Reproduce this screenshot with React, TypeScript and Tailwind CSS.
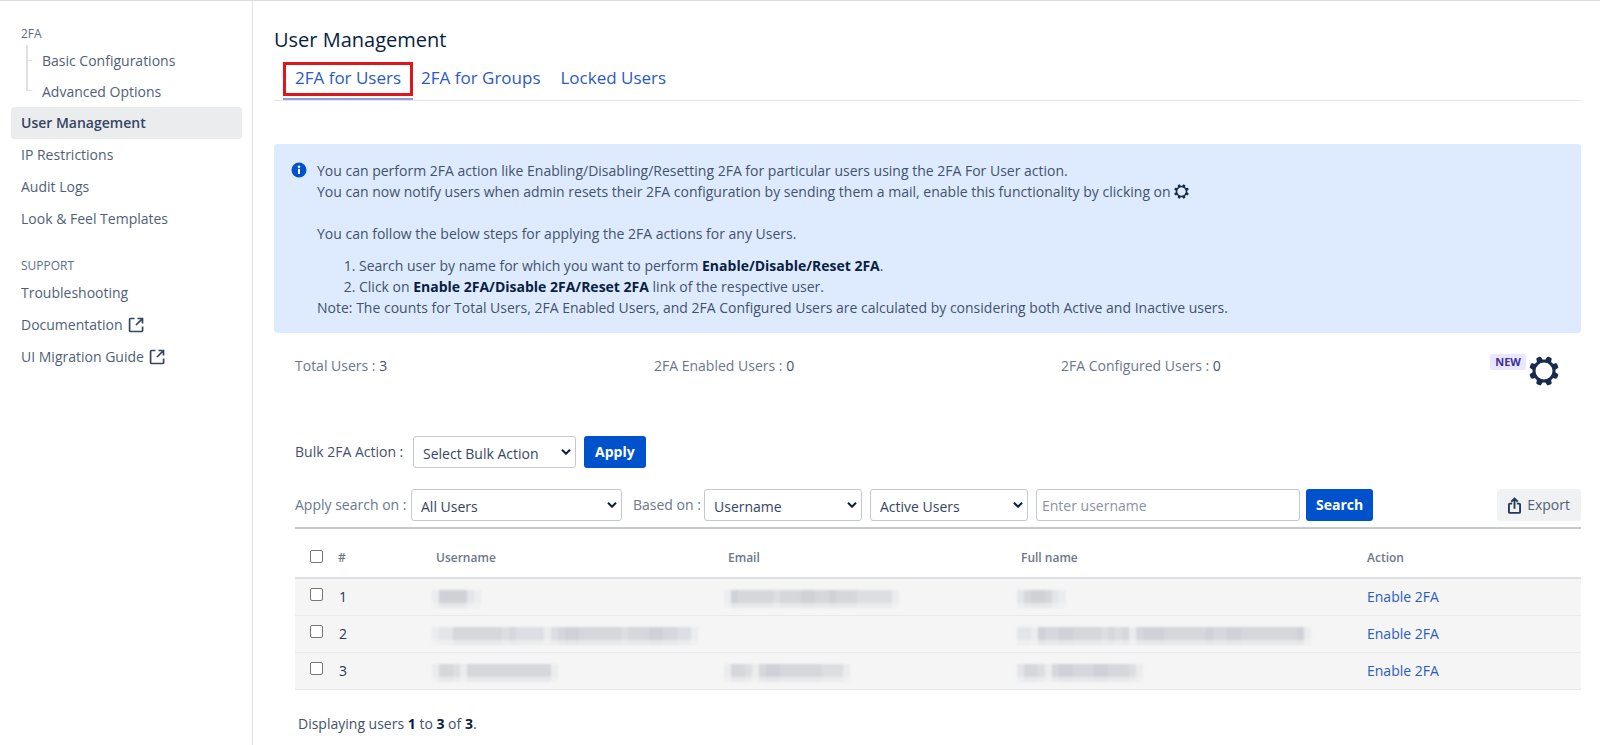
import type { ReactNode } from "react";

const BLOCK = 7;

type User = {
  id: number;
  username: string;
  email: string;
  fullName: string;
};

// Every digit is the darkness of one block of the redacted text, 0 is blank.
const USERS: User[] = [
  { id: 1, username: "1555521", email: "1544444344455445444333331", fullName: "2455421" },
  {
    id: 2,
    username: "12244444443433331345544444434445544331",
    email: "",
    fullName: "221544554444343414555444444544554444444451",
  },
  { id: 3, username: "144314444444444441", email: "144314554444443331", fullName: "244314554445544431" },
];

const SHADES = ["none", "#ebecee", "#e3e5e8", "#dcdee1", "#d5d7db", "#cfd1d6"];

function Redacted({ pattern }: { pattern: string }) {
  if (!pattern) return null;
  return (
    <svg width={pattern.length * BLOCK} height="22" aria-hidden="true" className="-ml-1 block overflow-visible blur-[1px]">
      {pattern.split("").map((level, i) => (
        <g key={i} fill={SHADES[Number(level)]}>
          <rect x={i * BLOCK} y="4" width={BLOCK} height="13" />
          <rect x={i * BLOCK} y="17" width={BLOCK} height="5" opacity="0.4" />
        </g>
      ))}
    </svg>
  );
}

function GearIcon({ className }: { className: string }) {
  return (
    <svg viewBox="0 0 30 30" className={className} aria-hidden="true">
      <g fill="currentColor">
        {[22.5, 67.5, 112.5, 157.5, 202.5, 247.5, 292.5, 337.5].map((angle) => (
          <path key={angle} d="M11.6 6 12.4 1.300Q12.600.2 13.700.2h2.600q1.100 0 1.300 1.100L18.400 6z" transform={`rotate(${angle} 15 15)`} />
        ))}
      </g>
      <circle cx="15" cy="15" r="10" fill="none" stroke="currentColor" strokeWidth="3" />
    </svg>
  );
}

function ExternalIcon() {
  return (
    <svg viewBox="0 0 16 16" className="h-4 w-4" fill="none" stroke="#344563" strokeWidth="1.7" aria-hidden="true">
      <path d="M6.5 1.5H2.6q-1 0-1 1v11q0 1 1 1h11q1 0 1-1V9.5M9.5 1.5h5v5M14.2 1.8 8 8" />
    </svg>
  );
}

function ExportIcon() {
  return (
    <svg viewBox="0 0 14 18" className="h-[17px] w-[13px]" fill="none" stroke="#253858" strokeWidth="2" aria-hidden="true">
      <path d="M4.5 7H2q-1 0-1 1v8q0 1 1 1h10q1 0 1-1V8q0-1-1-1H9.5M7 12.5V2M3.5 5 7 1.6 10.5 5" />
    </svg>
  );
}

function InfoIcon() {
  return (
    <svg viewBox="0 0 16 16" className="h-4 w-4 shrink-0" aria-hidden="true">
      <circle cx="8" cy="8" r="7.5" fill="#0052cc" />
      <circle cx="8" cy="4.7" r="1.2" fill="#fff" />
      <rect x="7" y="6.8" width="2" height="5.2" rx=".6" fill="#fff" />
    </svg>
  );
}

function NavItem({ children, active = false, external = false }: { children: ReactNode; active?: boolean; external?: boolean }) {
  return (
    <li>
      <a
        href="#"
        className={
          active
            ? "flex h-8 items-center rounded-[3px] bg-[#ebecee] px-2.5 font-semibold text-[#344563]"
            : "flex h-8 items-center gap-[5px] px-2.5 text-[#505f79]"
        }
      >
        {children}
        {external && <ExternalIcon />}
      </a>
    </li>
  );
}

function Sidebar() {
  return (
    <nav className="w-[253px] shrink-0 border-r border-[#dfe1e5] pl-[11px] pr-2.5 pt-[22px]">
      <h2 className="h-[22px] px-2.5 text-xs leading-[22px] text-[#5e6c84]">2FA</h2>
      <ul className="relative pl-5">
        <li className="absolute left-[15px] top-0 h-[46px] w-1.5 border-b border-l-2 border-[#dfe1e5]" aria-hidden="true" />
        <li className="absolute left-[15px] top-[15px] w-1.5 border-t border-[#dfe1e5]" aria-hidden="true" />
        <li>
          <a href="#" className="flex h-[31px] items-center px-[11px] text-[#505f79]">Basic Configurations</a>
        </li>
        <li>
          <a href="#" className="flex h-[31px] items-center px-[11px] text-[#505f79]">Advanced Options</a>
        </li>
      </ul>
      <ul>
        <NavItem active>User Management</NavItem>
        <NavItem>IP Restrictions</NavItem>
        <NavItem>Audit Logs</NavItem>
        <NavItem>Look &amp; Feel Templates</NavItem>
      </ul>
      <h2 className="mt-5 h-[22px] px-2.5 text-xs leading-[22px] text-[#5e6c84]">SUPPORT</h2>
      <ul>
        <NavItem>Troubleshooting</NavItem>
        <NavItem external>Documentation</NavItem>
        <NavItem external>UI Migration Guide</NavItem>
      </ul>
    </nav>
  );
}

function Select({ id, label, options, className }: { id: string; label?: string; options: string[]; className: string }) {
  return (
    <div className={`relative ${className}`}>
      <select
        id={id}
        aria-label={label}
        className="h-8 w-full appearance-none rounded-[3px] border border-[#c4c8cf] bg-white pl-[9px] pr-6 pt-1 text-[#344563]"
      >
        {options.map((option) => (
          <option key={option}>{option}</option>
        ))}
      </select>
      <svg viewBox="0 0 10 6" className="pointer-events-none absolute right-[5px] top-[13px] h-1.5 w-2.5" fill="none" stroke="#091e42" strokeWidth="2" aria-hidden="true">
        <path d="m1 .7 4 4 4-4" />
      </svg>
    </div>
  );
}

const checkboxClass = "mb-1 block h-[13px] w-[13px] appearance-none rounded-[2px] border border-[#767676] bg-white";

function InfoPanel() {
  return (
    <section className="mt-[43px] flex gap-2.5 rounded-[3px] bg-[#deebff] pb-[15px] pl-[17px] pr-4 pt-4 leading-[21px] text-[#42526e]">
      <div className="pt-0.5">
        <InfoIcon />
      </div>
      <div>
        <p>You can perform 2FA action like Enabling/Disabling/Resetting 2FA for particular users using the 2FA For User action.</p>
        <p>
          You can now notify users when admin resets their 2FA configuration by sending them a mail, enable this functionality by clicking on{" "}
          <GearIcon className="inline h-[15px] w-[15px] align-[-2px] text-[#172b4d]" />
        </p>
        <p className="mt-[21px]">You can follow the below steps for applying the 2FA actions for any Users.</p>
        <ol className="mt-[11px] list-decimal pl-[42px]">
          <li>
            Search user by name for which you want to perform <b className="text-[#091e42]">Enable/Disable/Reset 2FA</b>.
          </li>
          <li>
            Click on <b className="text-[#091e42]">Enable 2FA/Disable 2FA/Reset 2FA</b> link of the respective user.
          </li>
        </ol>
        <p>Note: The counts for Total Users, 2FA Enabled Users, and 2FA Configured Users are calculated by considering both Active and Inactive users.</p>
      </div>
    </section>
  );
}

function UsersTable() {
  return (
    <table className="w-full table-fixed border-t-2 border-[#c8c9cb] text-left">
      <thead>
        <tr className="h-[50px] border-b-2 border-[#dfe0e3] text-xs text-[#6b778c]">
          <th className="w-[133px] pl-[15px] pt-2.5 font-semibold">
            <div className="flex items-center gap-[15px]">
              <input type="checkbox" aria-label="Select all users" className={checkboxClass} />
              <span>#</span>
            </div>
          </th>
          <th className="w-[292px] pl-2 pt-2.5 font-semibold">Username</th>
          <th className="w-[293px] pl-2 pt-2.5 font-semibold">Email</th>
          <th className="pl-2 pt-2.5 font-semibold">Full name</th>
          <th className="w-[222px] pl-2 pt-2.5 font-semibold">Action</th>
        </tr>
      </thead>
      <tbody>
        {USERS.map((user) => (
          <tr key={user.id} className="h-[37px] border-b border-[#e9e9eb] bg-[#f5f5f5]">
            <td className="pl-[15px]">
              <div className="flex items-center gap-4">
                <input type="checkbox" aria-label={`Select user ${user.id}`} className={checkboxClass} />
                <span className="text-[#253858]">{user.id}</span>
              </div>
            </td>
            <td className="pl-2">
              <Redacted pattern={user.username} />
            </td>
            <td className="pl-2">
              <Redacted pattern={user.email} />
            </td>
            <td className="pl-2">
              <Redacted pattern={user.fullName} />
            </td>
            <td className="pl-2">
              <a href="#" className="text-[#2a5bc4]">Enable 2FA</a>
            </td>
          </tr>
        ))}
      </tbody>
    </table>
  );
}

export default function App() {
  return (
    <div className="flex min-h-screen border-t border-[#dddddd] bg-white font-['Open_Sans','Noto_Sans',sans-serif] text-sm text-[#42526e]">
      <Sidebar />
      <main className="min-w-0 flex-1 pb-2 pl-[21px] pr-[19px] pt-6">
        <h1 className="text-xl leading-[30px] text-[#091e42]">User Management</h1>
        <div className="flex border-b border-[#e6e7ea] pl-[9px] pt-[7px] text-[17px] text-[#2a5bc4]">
          <div className="border-b-2 border-[#8f9ae3] pb-0.5">
            <a href="#" className="flex h-[34px] items-center border-[3px] border-[#e0161c] px-[9px] pb-0.5">2FA for Users</a>
          </div>
          <a href="#" className="flex h-[34px] items-center px-2 pb-0.5">2FA for Groups</a>
          <a href="#" className="flex h-[34px] items-center px-3 pb-0.5">Locked Users</a>
        </div>

        <InfoPanel />

        <div className="pl-[21px]">
          <div className="flex h-[66px] items-center text-[#6b778c]">
            <p className="w-[359px]">Total Users : <span className="text-[#42526e]">3</span></p>
            <p className="w-[407px]">2FA Enabled Users : <span className="text-[#42526e]">0</span></p>
            <p>2FA Configured Users : <span className="text-[#42526e]">0</span></p>
            <div className="ml-auto flex items-start gap-[3px] pr-[22px] pt-2">
              <span className="rounded-[3px] bg-[#eae6ff] px-[5px] text-[11px] font-bold leading-4 text-[#403294]">NEW</span>
              <button type="button" aria-label="Notification settings" className="mt-0.5">
                <GearIcon className="h-[30px] w-[30px] text-[#172b4d]" />
              </button>
            </div>
          </div>

          <div className="mt-[37px] flex items-center">
            <label htmlFor="bulk-action" className="w-[118px]">Bulk 2FA Action :</label>
            <Select id="bulk-action" options={["Select Bulk Action", "Enable 2FA", "Disable 2FA", "Reset 2FA"]} className="w-[163px]" />
            <button type="button" className="ml-2 h-8 rounded-[3px] bg-[#0052cc] px-[11px] font-bold text-white">Apply</button>
          </div>

          <div className="mb-1.5 mt-[21px] flex items-center text-[#6b778c]">
            <label htmlFor="search-on" className="w-[116px]">Apply search on :</label>
            <Select id="search-on" options={["All Users", "2FA Enabled Users"]} className="w-[211px]" />
            <label htmlFor="based-on" className="ml-[11px] w-[71px]">Based on :</label>
            <Select id="based-on" options={["Username", "Email"]} className="w-[158px]" />
            <Select id="status" label="User status" options={["Active Users", "Inactive Users"]} className="ml-2 w-[158px]" />
            <input
              type="text"
              aria-label="Username"
              placeholder="Enter username"
              className="ml-2 h-8 w-[264px] rounded-[3px] border border-[#c4c8cf] px-[5px] placeholder:text-[#8993a4]"
            />
            <button type="button" className="ml-1.5 h-8 rounded-[3px] bg-[#0052cc] px-2.5 font-bold text-white">Search</button>
            <button type="button" className="ml-auto flex h-8 items-center gap-1.5 rounded-[3px] bg-[#f0f1f2] px-[11px] text-[#505f79]">
              <ExportIcon />
              Export
            </button>
          </div>

          <UsersTable />

          <p className="mt-6 pl-[3px]">
            Displaying users <b className="text-[#091e42]">1</b> to <b className="text-[#091e42]">3</b> of <b className="text-[#091e42]">3</b>.
          </p>
        </div>
      </main>
    </div>
  );
}
